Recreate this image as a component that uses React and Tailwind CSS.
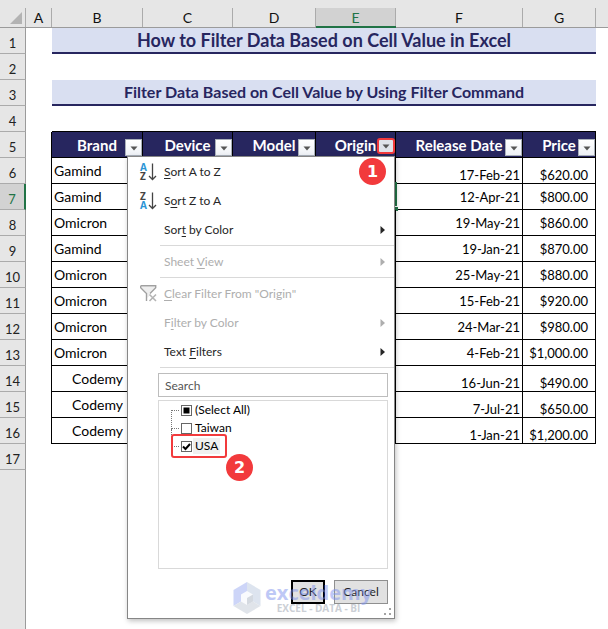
import React from "react";

const rows = [
  { brand: "Gamind", date: "17-Feb-21", price: "$620.00", low: true },
  { brand: "Gamind", date: "12-Apr-21", price: "$800.00" },
  { brand: "Omicron", date: "19-May-21", price: "$860.00" },
  { brand: "Gamind", date: "19-Jan-21", price: "$870.00" },
  { brand: "Omicron", date: "25-May-21", price: "$880.00" },
  { brand: "Omicron", date: "15-Feb-21", price: "$920.00" },
  { brand: "Omicron", date: "24-Mar-21", price: "$980.00" },
  { brand: "Omicron", date: "4-Feb-21", price: "$1,000.00" },
  { brand: "Codemy", date: "16-Jun-21", price: "$490.00", low: true },
  { brand: "Codemy", date: "7-Jul-21", price: "$650.00", low: true },
  { brand: "Codemy", date: "1-Jan-21", price: "$1,200.00", low: true },
];
const columns = ["A", "B", "C", "D", "E", "F", "G"];
const fields = ["Brand", "Device", "Model", "Origin", "Release Date", "Price"];

function RowNumber({ n }) {
  return (
    <th
      scope="row"
      className={
        "h-[26px] border-b border-b-[#ababab] p-0 pt-1 text-center align-middle text-[13px] leading-5 font-normal " +
        (n === 7 ? "border-r-2 border-r-[#217346] bg-[#d2d2d2] text-[#217346]" : "border-r border-r-[#9b9b9b] bg-[#e6e6e6] text-[#222]")
      }
    >
      {n}
    </th>
  );
}

function FilterButton({ label, highlighted }) {
  return (
    <button
      type="button"
      aria-label={"Filter " + label}
      className={
        "col-start-1 row-start-1 flex items-center justify-center place-self-end " +
        (highlighted ? "mb-[3px] h-4 w-[18px] rounded-[3px] border-2 border-[#f23a3c] bg-[#dfe3ea]" : "mb-px h-[17px] w-[17px] border border-[#a9b0ba] bg-linear-to-b from-white to-[#eef1f6]")
      }
    >
      <svg width="8" height="5" viewBox="0 0 8 5" className="mt-px" aria-hidden="true">
        <path d="M0.5 0.5h7L4 4.5z" fill="#555" />
      </svg>
    </button>
  );
}

function Banner({ n, text, size }) {
  return (
    <tr>
      <RowNumber n={n} />
      <td className="p-0" />
      <td colSpan={6} className={"border-b-2 border-[#27265f] bg-[#d9dff1] p-0 text-center leading-6 font-bold text-[#27265f] " + size}>
        {text}
      </td>
      <td className="p-0" />
    </tr>
  );
}

function Sheet() {
  return (
    <table className="w-full table-fixed border-separate border-spacing-0">
      <colgroup>
        <col className="w-[26px]" />
        <col className="w-[26px]" />
        <col className="w-[91px]" />
        <col className="w-[90px]" />
        <col className="w-[83px]" />
        <col className="w-[80px]" />
        <col className="w-[127px]" />
        <col className="w-[73px]" />
        <col />
      </colgroup>
      <thead>
        <tr className="bg-[#e6e6e6]">
          <th aria-label="Select all" className="h-7 border-b border-[#9b9b9b] p-0 align-bottom">
            <div className="flex h-[19px] items-end justify-end border-r border-[#ababab] pr-[3px] pb-[3px]">
              <svg width="12" height="12" viewBox="0 0 12 12" aria-hidden="true">
                <path d="M12 0v12H0z" fill="#b3b3b3" />
              </svg>
            </div>
          </th>
          {columns.map((c) => (
            <th key={c} scope="col" className={"p-0 align-bottom font-normal " + (c === "E" ? "border-b-2 border-[#217346]" : "border-b border-[#9b9b9b]")}>
              <div
                className={
                  "border-r border-[#ababab] text-center text-sm " +
                  (c === "E" ? "h-[18px] bg-[#d2d2d2] leading-[19px] text-[#217346]" : "h-[19px] leading-[19px] text-[#111]")
                }
              >
                {c}
              </div>
            </th>
          ))}
          <th aria-label="Next column" className="border-b border-[#9b9b9b] p-0" />
        </tr>
      </thead>
      <tbody>
        <Banner n={1} text="How to Filter Data Based on Cell Value in Excel" size="text-[18px]" />
        <tr>
          <RowNumber n={2} />
          <td colSpan={8} className="p-0" />
        </tr>
        <Banner n={3} text="Filter Data Based on Cell Value by Using Filter Command" size="text-[16px]" />
        <tr>
          <RowNumber n={4} />
          <td className="p-0" />
          <td colSpan={6} className="border-b border-black p-0" />
          <td className="p-0" />
        </tr>
        <tr>
          <RowNumber n={5} />
          <td className="border-r border-black p-0" />
          {fields.map((f) => (
            <th key={f} scope="col" className="border-r border-b border-black bg-[#27265f] p-0">
              <div className="grid h-[25px]">
                <span className="col-start-1 row-start-1 place-self-center text-[15px] leading-5 font-bold whitespace-nowrap text-white">{f}</span>
                <FilterButton label={f} highlighted={f === "Origin"} />
              </div>
            </th>
          ))}
          <td className="p-0" />
        </tr>
        {rows.map((r, i) => (
          <tr key={i} className="text-black">
            <RowNumber n={i + 6} />
            <td className="border-r border-black p-0" />
            <td className={"border-r border-b border-black p-0 pt-[3px] align-top text-sm leading-5 " + (r.brand === "Codemy" ? "pr-[19px] text-right" : "pl-0.5")}>{r.brand}</td>
            <td className="border-r border-b border-black p-0" />
            <td className="border-r border-b border-black p-0" />
            <td className="relative border-r border-b border-black p-0">
              {i === 1 && (
                <>
                  <span className="absolute -top-0.5 -right-0.5 bottom-[3px] left-0 border-2 border-[#217346]" />
                  <span className="absolute -right-[3px] -bottom-0.5 h-[5px] w-1 border-t border-white bg-[#217346]" />
                </>
              )}
            </td>
            <td className={"border-r border-b border-black p-0 pr-0.5 text-right text-[13px] leading-4 " + (r.low ? "align-bottom" : "align-middle")}>{r.date}</td>
            <td className={"border-r border-b border-black p-0 pr-[7px] text-right text-[13px] leading-4 " + (r.low ? "align-bottom" : "align-middle")}>{r.price}</td>
            <td className="p-0" />
          </tr>
        ))}
        <tr>
          <RowNumber n={17} />
          <td colSpan={8} className="p-0" />
        </tr>
      </tbody>
    </table>
  );
}

function SortIcon({ descending }) {
  return (
    <svg width="18" height="22" viewBox="-1 -2 18 22" className="-ml-px overflow-visible" aria-hidden="true">
      <g fontFamily="Open Sans, sans-serif" fontWeight="700" fontSize="10">
        <text x="0" y="8" fill={descending ? "#444" : "#2b95d6"}>{descending ? "Z" : "A"}</text>
        <text x="0" y="17" fill={descending ? "#2b95d6" : "#444"}>{descending ? "A" : "Z"}</text>
      </g>
      <path d="M12.5 0.500v16M9 13l3.500 3.500 3.500-3.500" fill="none" stroke="#444" strokeWidth="1.3" />
    </svg>
  );
}

function ClearFilterIcon() {
  return (
    <svg width="17" height="17" viewBox="0 0 17 17" aria-hidden="true">
      <path d="M1.500 1.500h13.500v1L9.500 8v3L7 13V8L1.500 2.500z" fill="#eee" />
      <path d="M0.700 0.700h15v2L10 8.500M0.700 0.700v2L6.500 8.500v7.500" fill="none" stroke="#a0a0a0" strokeWidth="1.4" />
      <path d="M9.500 9.500l6.500 6.500M16 9.500l-6.500 6.500" stroke="#b4b4b4" strokeWidth="1.6" />
    </svg>
  );
}

function MenuItem({ before, hot, after, icon, submenu, disabled }) {
  return (
    <button
      type="button"
      role="menuitem"
      disabled={disabled}
      className={"flex h-[29px] w-full items-center pr-[9px] pl-3 text-left " + (disabled ? "text-[#aeaeae]" : "text-[#262626]")}
    >
      <span className="flex w-6 shrink-0">{icon}</span>
      <span className="flex-1">
        {before}
        <span className="underline underline-offset-2">{hot}</span>
        {after}
      </span>
      {submenu && (
        <svg width="5" height="8" viewBox="0 0 5 8" fill="currentColor" aria-hidden="true">
          <path d="M0.500 0L5 4 0.500 8z" />
        </svg>
      )}
    </button>
  );
}

function Separator() {
  return <div role="separator" className="my-px ml-8 h-px bg-[#d9d9d9]" />;
}

function Choice({ id, label, state, first, marked }) {
  return (
    <li className="relative flex h-[18px] items-center pl-3">
      <span className={"w-2 self-start border-dotted border-[#777] " + (first ? "mt-[9px] h-[9px] border-t border-l" : marked ? "-mt-2 h-[18px] border-b border-l" : "-mt-px h-[11px] border-b border-l")} />
      <span className="ml-0.5 grid">
        <input
          id={id}
          type="checkbox"
          defaultChecked={state === "on"}
          ref={(el) => {
            if (el) el.indeterminate = state === "partial";
          }}
          className="col-start-1 row-start-1 h-[11px] w-[11px] appearance-none border border-[#666] bg-white"
        />
        <svg width="11" height="11" viewBox="0 0 11 11" className="pointer-events-none col-start-1 row-start-1" aria-hidden="true">
          {state === "partial" && <path d="M2.500 2.500h6v6h-6z" fill="#000" />}
          {state === "on" && <path d="M2 5.500l2.500 2.500L9 3" fill="none" stroke="#000" strokeWidth="2" />}
        </svg>
      </span>
      <label htmlFor={id} className={"ml-px px-0.5 leading-4 text-black " + (marked ? "bg-[#f0f0f0]" : "")}>
        {label}
      </label>
      {marked && (
        <>
          <span className="absolute -inset-y-[3px] left-3 w-14 rounded-[3px] border-2 border-[#f23a3c]" />
          <Badge n={2} place="top-[17px] left-[67px]" />
        </>
      )}
    </li>
  );
}

function Badge({ n, place }) {
  return (
    <span className={"absolute flex h-[27px] w-[27px] items-center justify-center rounded-full bg-[#f23a3c] font-['DejaVu_Sans',sans-serif] text-base leading-none font-bold text-white " + place}>
      {n}
    </span>
  );
}

function Watermark() {
  return (
    <div className="pointer-events-none absolute bottom-1 left-[105px] flex items-center gap-1 opacity-50">
      <svg width="28" height="32" viewBox="0 0 28 32" aria-hidden="true">
        <path d="M14 0l13.500 8v16L14 16z" fill="#bccbe0" />
        <path d="M14 0L0.500 8v16L14 16z" fill="#9cadf3" />
        <path d="M0.500 24L14 16l13.500 8L14 32z" fill="#c3cbd6" />
        <path d="M14 9l6 3.500v7L14 23l-6-3.500v-7z" fill="#f5f7fc" />
        <path d="M14 16l6-3.500v7L14 23z" fill="#aab4c3" />
      </svg>
      <div className="flex flex-col items-center font-['Open_Sans',sans-serif] font-bold">
        <span className="text-xl leading-5 text-[#7f93ee]">exceldemy</span>
        <span className="text-[10px] leading-[10px] text-[#98a0ad]">EXCEL - DATA - BI</span>
      </div>
    </div>
  );
}

function FilterMenu() {
  return (
    <div role="menu" className="absolute top-[156px] left-[127px] w-[268px] border border-[#868686] bg-white pb-3.5 text-xs shadow-[1px_2px_5px_rgba(0,0,0,0.25)]">
      <MenuItem hot="S" after="ort A to Z" icon={<SortIcon />} />
      <MenuItem before="S" hot="o" after="rt Z to A" icon={<SortIcon descending />} />
      <MenuItem before="Sor" hot="t" after=" by Color" submenu />
      <Separator />
      <MenuItem before="Sheet " hot="V" after="iew" submenu disabled />
      <Separator />
      <MenuItem hot="C" after={'lear Filter From "Origin"'} icon={<ClearFilterIcon />} disabled />
      <MenuItem before="F" hot="i" after="lter by Color" submenu disabled />
      <MenuItem before="Text " hot="F" after="ilters" submenu />
      <Separator />
      <div className="mt-[5px] mr-1.5 ml-[30px]">
        <input type="text" aria-label="Search" placeholder="Search" className="block h-6 w-full border border-[#bdbdbd] bg-white px-1.5 placeholder:text-[#555]" />
        <ul className="mt-[3px] h-[169px] border border-[#d9d9d9]">
          <Choice id="all" label="(Select All)" state="partial" first />
          <Choice id="taiwan" label="Taiwan" state="off" />
          <Choice id="usa" label="USA" state="on" marked />
        </ul>
        <div className="mt-[11px] flex justify-end gap-[9px] text-[#222]">
          <button type="button" className="h-6 w-[34px] border-2 border-black bg-[#e1e1e1]">OK</button>
          <button type="button" className="h-6 w-[54px] border border-[#8f8f8f] bg-[#e1e1e1]">Cancel</button>
        </div>
      </div>
      <svg width="8" height="8" viewBox="0 0 8 8" className="absolute right-0.5 bottom-0.5" aria-hidden="true">
        <path d="M5 0h2v2H5zM0 5h2v2H0zM5 5h2v2H5z" fill="#a3a3a3" />
      </svg>
      <Badge n={1} place="top-px right-2" />
      <Watermark />
    </div>
  );
}

export default function App() {
  return (
    <main className="relative flex min-h-screen flex-col bg-white font-[Lato,sans-serif]">
      <Sheet />
      <div className="w-[26px] flex-1 border-r border-[#9b9b9b] bg-[#e6e6e6]" />
      <FilterMenu />
    </main>
  );
}
